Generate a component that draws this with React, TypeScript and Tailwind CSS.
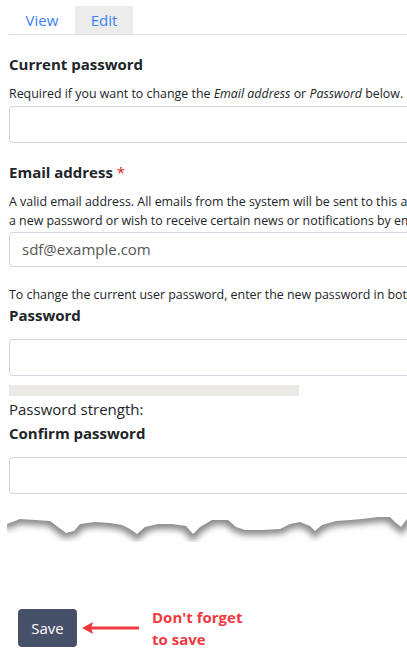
const font = { fontFamily: '"Open Sans", "Noto Sans", sans-serif' };

const torn: [number, number][] = [
  [7, 525], [20, 520], [35, 521], [50, 522], [58, 528], [66, 534], [74, 532],
  [80, 525], [95, 523], [110, 524], [122, 526], [130, 530], [137, 535], [145, 528],
  [158, 525], [172, 525], [186, 527], [193, 535], [200, 528], [212, 521], [228, 521],
  [236, 528], [245, 531], [262, 531], [280, 530], [290, 525], [300, 523], [310, 527],
  [315, 532], [322, 526], [336, 522], [350, 521], [362, 520], [378, 518], [390, 518],
  [396, 524], [401, 528], [407, 520],
];

function TornEdge() {
  const pts = torn.map(([x, y]) => `${x},${y - 510}`).join(" ");
  return (
    <svg width="407" height="40" viewBox="0 0 407 40" className="block">
      <defs>
        <clipPath id="below">
          <polygon points={`${pts} 407,40 7,40`} />
        </clipPath>
        <filter id="blur" x="-5%" y="-50%" width="110%" height="200%">
          <feGaussianBlur stdDeviation="3" />
        </filter>
      </defs>
      <g clipPath="url(#below)">
        <polyline points={pts} fill="none" stroke="#8a8a8a" strokeWidth="12" strokeLinecap="round" filter="url(#blur)" transform="translate(0,-1)" />
      </g>
    </svg>
  );
}

function Field({ className = "", children }: { className?: string; children?: React.ReactNode }) {
  return (
    <div className={`w-[640px] rounded-[4px] border border-[#ced4da] bg-white flex items-center px-[12px] ${className}`}>
      {children}
    </div>
  );
}

export default function App() {
  return (
    <div className="w-[407px] h-[668px] overflow-hidden bg-white text-[#212529]" style={font}>
      <div className="w-[700px] pl-[9px]">
        <div className="pt-[6px] flex border-b border-[#dee2e6] w-[660px]">
          <div className="w-[66px] h-[28px] flex items-center justify-center text-[15px] text-[#3b82f6]">View</div>
          <div className="w-[58px] h-[28px] flex items-center justify-center text-[15px] text-[#3b82f6] bg-[#ececec]">Edit</div>
        </div>

        <div className="mt-[19px] h-[20px] leading-[20px] text-[15px] font-bold">Current password</div>
        <div className="mt-[10px] h-[19px] leading-[19px] text-[12.4px] whitespace-nowrap">
          Required if you want to change the <em>Email address</em> or <em>Password</em> below.
        </div>
        <Field className="mt-[3px] h-[37px]" />

        <div className="mt-[19px] h-[20px] leading-[20px] text-[15px] font-bold">
          Email address <span className="text-[#dc2626] font-normal">*</span>
        </div>
        <div className="mt-[10px] text-[12.4px] leading-[19px] whitespace-nowrap">
          <div>A valid email address. All emails from the system will be sent to this address. The email address is not made public and will only be used if you wish to receive</div>
          <div>a new password or wish to receive certain news or notifications by email.</div>
        </div>
        <Field className="mt-[2px] h-[35px]">
          <span className="text-[15px] text-[#555]">sdf@example.com</span>
        </Field>

        <div className="mt-[18px] h-[19px] leading-[19px] text-[12.4px] whitespace-nowrap">
          To change the current user password, enter the new password in both fields.
        </div>
        <div className="mt-px h-[20px] leading-[20px] text-[15px] font-bold">Password</div>
        <Field className="mt-[14px] h-[37px]" />
        <div className="mt-[9px] w-[290px] h-[11px] bg-[#ebe9e5]" />
        <div className="mt-[3px] h-[20px] leading-[20px] text-[15px]">Password strength:</div>
        <div className="mt-[4px] h-[20px] leading-[20px] text-[15px] font-bold">Confirm password</div>
        <Field className="mt-[14px] h-[37px]" />
      </div>

      <div className="mt-[15px]">
        <TornEdge />
      </div>

      <div className="mt-[57px] pl-[18px] flex items-center">
        <button className="w-[59px] h-[38px] rounded-[4px] bg-[#465068] text-white text-[15px]">Save</button>
        <svg width="62" height="14" viewBox="0 0 62 14" className="ml-[4px]">
          <line x1="8" y1="7" x2="58" y2="7" stroke="#f0393f" strokeWidth="3" />
          <polygon points="1,7 12,1 10,7 12,13" fill="#f0393f" />
        </svg>
        <div className="ml-[9px] text-[15px] leading-[22px] font-bold text-[#f0393f]">
          <div>Don't forget</div>
          <div>to save</div>
        </div>
      </div>
    </div>
  );
}
